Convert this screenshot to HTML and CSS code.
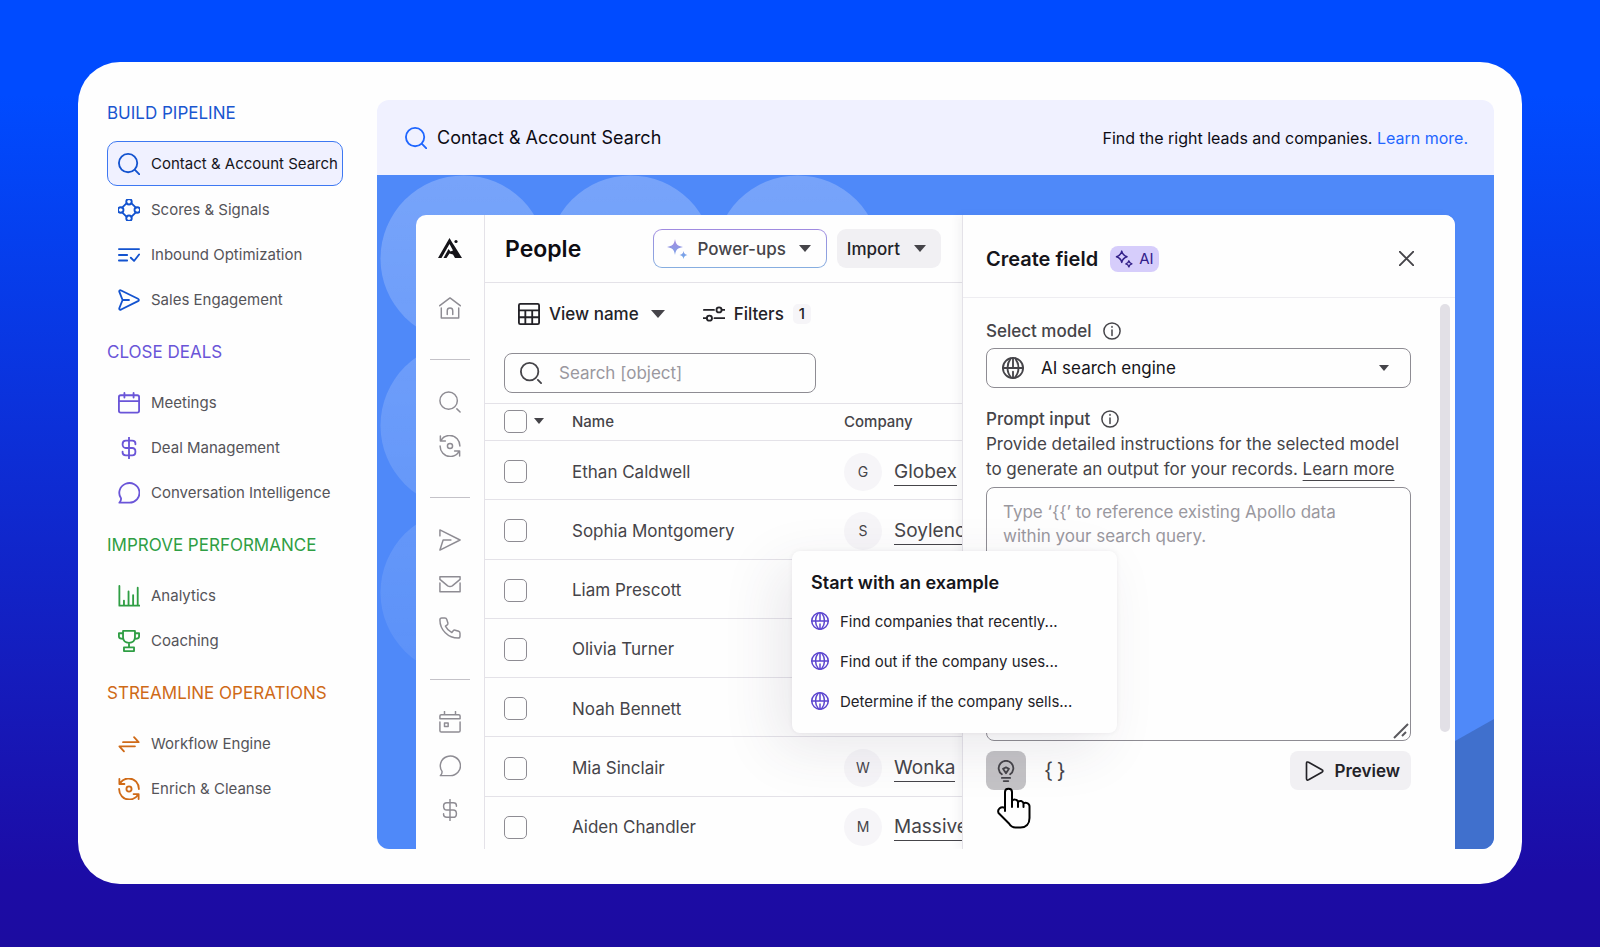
FILE: index.html
```html
<!DOCTYPE html>
<html lang="en">
<head>
    <meta charset="UTF-8">
    <meta name="viewport" content="width=device-width, initial-scale=1.0">
    <title>Contact &amp; Account Search</title>
    <link rel="stylesheet" href="styles.css">
</head>
<body>
    <!-- Icon sprite -->
    <svg class="sprite" aria-hidden="true">
        <symbol id="i-search" viewBox="0 0 24 24"><circle cx="11" cy="11" r="10"/><path d="M18.500 18.500l5 5"/></symbol>
        <symbol id="i-find" viewBox="0 0 24 24"><circle cx="10.5" cy="10.5" r="9.5"/><path d="M19.500 19.500l3.500 3.500"/></symbol>
        <symbol id="i-nodes" viewBox="0 0 24 24"><circle cx="12" cy="3" r="3"/><circle cx="12" cy="21" r="3"/><circle cx="3" cy="12" r="3"/><circle cx="21" cy="12" r="3"/><path d="M9.500 4.500L4.500 9.500M14.500 4.500L19.500 9.500M4.500 14.500L9.500 19.500M19.500 14.500L14.500 19.500"/></symbol>
        <symbol id="i-listcheck" viewBox="0 0 24 24"><path d="M1 5.500h22M1 12h9M1 18h9M14 15l3.500 3.500L23 11.500"/></symbol>
        <symbol id="i-send" viewBox="0 0 24 24"><path d="M1.500 3.200c-.5-1.600.5-2.300 1.900-1.600l18.400 9c1.300.7 1.300 2 0 2.700l-18.400 9.100c-1.400.6-2.400-.2-1.900-1.700L5 12zM5 12h7"/></symbol>
        <symbol id="i-calendar" viewBox="0 0 24 24"><rect x="1" y="3.500" width="22" height="19" rx="2"/><path d="M1 10h22M7 1v5M17 1v5"/></symbol>
        <symbol id="i-dollar" viewBox="0 0 24 24"><path d="M12 .5v23M19 8V7c0-2-1.500-3-3.500-3h-7C6.500 4 5 5.500 5 7.800S6.500 12 8.500 12h7c2 0 3.500 1.500 3.500 4s-1.500 4-3.500 4h-7C6.500 20 5 19 5 17v-1"/></symbol>
        <symbol id="i-chat" viewBox="0 0 24 24"><path d="M3.300 17.800A11 10.700 0 1 1 12 22.500H1.500c1.500-1.300 2-3 1.800-4.700z"/></symbol>
        <symbol id="i-chart" viewBox="0 0 24 24"><path d="M1.500 1v21.500H24M6.500 22v-5M11.500 22V7M16.500 22V11M21.500 22V3"/></symbol>
        <symbol id="i-trophy" viewBox="0 0 24 24"><path d="M5.500 1h13v7c0 3.500-2.500 6-6.500 6s-6.500-2.500-6.500-6zM5.500 3.500H1V7c0 1.500 1.500 2.500 4.500 2.500M18.500 3.500H23V7c0 1.500-1.500 2.500-4.500 2.500M12 14v5M6.500 19h11v4h-11z"/></symbol>
        <symbol id="i-swap" viewBox="0 0 24 24"><path d="M5.500 10H22.500L17.500 4.500M18.500 14.500H1.500l5 5.500"/></symbol>
        <symbol id="i-enrich" viewBox="0 0 24 24"><circle cx="12" cy="12" r="2.800"/><path d="M1.500 1v5.500H7M2.500 5.500C6-.5 15-1.200 19.800 4c2 2.200 3 5 3 8M22.500 23v-5.500H17M21.500 18.500c-3.500 6-12.500 6.700-17.300 1.500-2-2.200-3-5-3-8"/></symbol>
        <symbol id="i-home" viewBox="0 0 24 24"><path d="M.8 9.500L12 1l11.200 8.500M2.500 12v11h19V12M9 19v-4c0-4 6-4 6 0v4"/></symbol>
        <symbol id="i-plane" viewBox="0 0 24 24"><path d="M1 7.500V1l22 11L1 23l3.500-11H13"/></symbol>
        <symbol id="i-mail" viewBox="0 0 24 24"><path d="M1 7V4h22v3l-8.500 7c-2 1.200-3 1.200-5 0L1 7M1 11v9.500h22V11"/></symbol>
        <symbol id="i-phone" viewBox="0 0 24 24"><path d="M3 1.200h3.500c1 0 1.700.6 2 1.500l1.200 3.800c.2.900 0 1.600-.7 2.200L7 10c1.500 3 4 5.500 7 7l1.500-2c.6-.7 1.300-.9 2.200-.6l3.800 1.200c.9.300 1.400 1 1.400 2V21c0 1.200-.8 2-2 2C10 23 1 14 1 3.200c0-1.200.8-2 2-2z"/></symbol>
        <symbol id="i-schedule" viewBox="0 0 24 24"><path d="M1 8.500V5.500C1 4.500 1.500 4 2.500 4h19c1 0 1.500.5 1.500 1.500v3zM1 12v9.500c0 1 .5 1.500 1.500 1.500h19c1 0 1.500-.5 1.500-1.500V12M6 .5V4M18 .5V4M6 13h4v4H6z"/></symbol>
        <symbol id="i-grid" viewBox="0 0 24 24"><rect x="1" y="1" width="22" height="22" rx="1.500"/><path d="M1 8h22M1 15.500h22M8 8v15M15.500 8v15"/></symbol>
        <symbol id="i-filter" viewBox="0 0 24 24"><circle cx="17.500" cy="7.500" r="2.800"/><circle cx="7" cy="16.500" r="2.800"/><path d="M1 7.500h11M20.500 7.500H24M0 16.500h4M12.500 16.500H24"/></symbol>
        <symbol id="i-globe" viewBox="0 0 24 24"><circle cx="12" cy="12" r="11"/><path d="M1 12h22M12 1v11M9.500 1.500C7 5 6 8 6 12c0 4 1.500 7.500 4 10.500M14.500 1.500C17 5 18 8 18 12c0 4-1.500 7.500-4 10.500M12 16v7"/></symbol>
        <symbol id="i-info" viewBox="0 0 24 24"><circle cx="12" cy="12" r="10.800"/><path d="M12 10.500V18M12 6v1"/></symbol>
        <symbol id="i-close" viewBox="0 0 24 24"><path d="M1 1l22 22M23 1L1 23"/></symbol>
        <symbol id="i-sparkle" viewBox="0 0 24 24"><path d="M9 1.500c1 4.500 2.500 6 7 7.500-4.500 1.500-6 3-7 7.500-1-4.500-2.500-6-7-7.500 4.500-1.500 6-3 7-7.500zM18.500 14.500c.6 2.400 1.600 3.400 4 4-2.400.6-3.400 1.600-4 4-.6-2.400-1.600-3.400-4-4 2.400-.6 3.400-1.600 4-4z"/></symbol>
        <symbol id="i-bulb" viewBox="0 0 24 24"><path d="M7.500 15.500a8 8 0 1 1 9 0M7.500 19.500h9M9.500 23h5M12 14.500L8.800 9.500l3.200-1.500 3.200 1.500z"/></symbol>
        <symbol id="i-play" viewBox="0 0 24 24"><path d="M3 3c0-1.800 1-2.200 2.500-1.500l16 9c1.500.8 1.500 2.200 0 3l-16 9C4 23.300 3 22.800 3 21z"/></symbol>
    </svg>

    <div class="card">
        <nav class="sidebar">
            <section class="group build">
                <h2>BUILD PIPELINE</h2>
                <a href="#" class="nav-item active"><svg class="icon"><use href="#i-search"/></svg>Contact &amp; Account Search</a>
                <a href="#" class="nav-item"><svg class="icon"><use href="#i-nodes"/></svg>Scores &amp; Signals</a>
                <a href="#" class="nav-item"><svg class="icon"><use href="#i-listcheck"/></svg>Inbound Optimization</a>
                <a href="#" class="nav-item"><svg class="icon"><use href="#i-send"/></svg>Sales Engagement</a>
            </section>
            <section class="group close">
                <h2>CLOSE DEALS</h2>
                <a href="#" class="nav-item"><svg class="icon"><use href="#i-calendar"/></svg>Meetings</a>
                <a href="#" class="nav-item"><svg class="icon"><use href="#i-dollar"/></svg>Deal Management</a>
                <a href="#" class="nav-item"><svg class="icon"><use href="#i-chat"/></svg>Conversation Intelligence</a>
            </section>
            <section class="group improve">
                <h2>IMPROVE PERFORMANCE</h2>
                <a href="#" class="nav-item"><svg class="icon"><use href="#i-chart"/></svg>Analytics</a>
                <a href="#" class="nav-item"><svg class="icon"><use href="#i-trophy"/></svg>Coaching</a>
            </section>
            <section class="group streamline">
                <h2>STREAMLINE OPERATIONS</h2>
                <a href="#" class="nav-item"><svg class="icon"><use href="#i-swap"/></svg>Workflow Engine</a>
                <a href="#" class="nav-item"><svg class="icon"><use href="#i-enrich"/></svg>Enrich &amp; Cleanse</a>
            </section>
        </nav>

        <main class="panel">
            <header class="panel-header">
                <h1><svg class="icon"><use href="#i-search"/></svg>Contact &amp; Account Search</h1>
                <p>Find the right leads and companies. <a href="#">Learn more.</a></p>
            </header>

            <div class="stage">
                <svg class="circles" width="520" height="520" aria-hidden="true">
                    <defs>
                        <pattern id="dots" width="167" height="167" x="3" patternUnits="userSpaceOnUse"><circle cx="83.5" cy="83.5" r="83" fill="#fff"/></pattern>
                        <linearGradient id="fade" x1="0" y1="0" x2="0" y2="1"><stop offset="0" stop-color="#fff" stop-opacity=".23"/><stop offset="1" stop-color="#fff" stop-opacity=".07"/></linearGradient>
                        <mask id="dotmask"><rect x="3" width="501" height="501" fill="url(#dots)"/></mask>
                    </defs>
                    <rect width="520" height="520" fill="url(#fade)" mask="url(#dotmask)"/>
                </svg>
                <svg class="wedge" width="46" height="130" aria-hidden="true"><path d="M0 26L46 0V130H0z" fill="#4070cd"/></svg>

                <div class="app">
                    <nav class="rail">
                        <a href="#" class="logo" aria-label="Home"><svg viewBox="0 0 24 22"><path d="M11.500 1L0 21h3.500l8-14 3.500 6.500-2.500 1-2-2.500L5.500 21h3l3-4.500 3.500 1L17 21h7l-7.500-12-2-3z"/><circle cx="18" cy="4.500" r="1.600"/></svg></a>
                        <a href="#" aria-label="Dashboard" class="rail-home"><svg class="icon"><use href="#i-home"/></svg></a>
                        <hr>
                        <a href="#" aria-label="Search"><svg class="icon"><use href="#i-find"/></svg></a>
                        <a href="#" aria-label="Enrich"><svg class="icon"><use href="#i-enrich"/></svg></a>
                        <hr>
                        <a href="#" aria-label="Sequences"><svg class="icon"><use href="#i-plane"/></svg></a>
                        <a href="#" aria-label="Emails"><svg class="icon"><use href="#i-mail"/></svg></a>
                        <a href="#" aria-label="Calls"><svg class="icon"><use href="#i-phone"/></svg></a>
                        <hr>
                        <a href="#" aria-label="Meetings"><svg class="icon"><use href="#i-schedule"/></svg></a>
                        <a href="#" aria-label="Conversations"><svg class="icon"><use href="#i-chat"/></svg></a>
                        <a href="#" aria-label="Deals"><svg class="icon"><use href="#i-dollar"/></svg></a>
                    </nav>

                    <section class="people">
                        <div class="people-header">
                            <h2>People</h2>
                            <button type="button" class="power-ups">
                                <svg width="24" height="24" viewBox="0 0 24 24" aria-hidden="true">
                                    <defs><linearGradient id="spark" x1="0" y1="0" x2="0" y2="1"><stop offset="0" stop-color="#a88ae0"/><stop offset="1" stop-color="#6fa8ea"/></linearGradient></defs>
                                    <path fill="url(#spark)" d="M10 2c1 5.500 2.500 7 8 8-5.500 1-7 2.500-8 8-1-5.500-2.500-7-8-8 5.500-1 7-2.500 8-8zM18.500 14c.6 2.600 1.400 3.400 4 4-2.600.6-3.400 1.400-4 4-.6-2.600-1.400-3.400-4-4 2.600-.6 3.400-1.400 4-4z"/>
                                </svg>
                                Power-ups <span class="caret"></span>
                            </button>
                            <button type="button" class="import">Import <span class="caret"></span></button>
                        </div>

                        <div class="toolbar">
                            <button type="button" class="view"><svg class="icon"><use href="#i-grid"/></svg>View name <span class="caret"></span></button>
                            <button type="button" class="filters"><svg class="icon"><use href="#i-filter"/></svg>Filters <span class="count">1</span></button>
                        </div>

                        <label class="search">
                            <svg class="icon"><use href="#i-find"/></svg>
                            <input type="text" placeholder="Search [object]" aria-label="Search">
                        </label>

                        <div class="table-wrap">
                            <table>
                                <thead>
                                    <tr>
                                        <th class="pick"><input type="checkbox" aria-label="Select all"><span class="caret small"></span></th>
                                        <th class="name">Name</th>
                                        <th>Company</th>
                                    </tr>
                                </thead>
                                <tbody>
                                    <tr><td class="pick"><input type="checkbox" aria-label="Select Ethan Caldwell"></td><td>Ethan Caldwell</td><td><span class="avatar">G</span><a href="#">Globex</a></td></tr>
                                    <tr><td class="pick"><input type="checkbox" aria-label="Select Sophia Montgomery"></td><td>Sophia Montgomery</td><td><span class="avatar">S</span><a href="#">Soylenc</a></td></tr>
                                    <tr><td class="pick"><input type="checkbox" aria-label="Select Liam Prescott"></td><td>Liam Prescott</td><td></td></tr>
                                    <tr><td class="pick"><input type="checkbox" aria-label="Select Olivia Turner"></td><td>Olivia Turner</td><td></td></tr>
                                    <tr><td class="pick"><input type="checkbox" aria-label="Select Noah Bennett"></td><td>Noah Bennett</td><td></td></tr>
                                    <tr><td class="pick"><input type="checkbox" aria-label="Select Mia Sinclair"></td><td>Mia Sinclair</td><td><span class="avatar">W</span><a href="#">Wonka</a></td></tr>
                                    <tr><td class="pick"><input type="checkbox" aria-label="Select Aiden Chandler"></td><td>Aiden Chandler</td><td><span class="avatar">M</span><a href="#">Massive</a></td></tr>
                                </tbody>
                            </table>
                        </div>
                    </section>

                    <aside class="drawer">
                        <div class="drawer-header">
                            <h2>Create field</h2>
                            <span class="ai-badge"><svg class="icon"><use href="#i-sparkle"/></svg>AI</span>
                            <button type="button" class="close-btn" aria-label="Close"><svg class="icon"><use href="#i-close"/></svg></button>
                        </div>
                        <div class="drawer-body">
                            <form class="form">
                                <label for="model">Select model <svg class="icon"><use href="#i-info"/></svg></label>
                                <div class="select">
                                    <svg class="icon"><use href="#i-globe"/></svg>
                                    <select id="model"><option>AI search engine</option></select>
                                    <span class="caret small"></span>
                                </div>
                                <label for="prompt">Prompt input <svg class="icon"><use href="#i-info"/></svg></label>
                                <p class="help">Provide detailed instructions for the selected model to generate an output for your records. <a href="#">Learn more</a></p>
                                <div class="prompt">
                                    <textarea id="prompt" placeholder="Type ‘{{’ to reference existing Apollo data within your search query."></textarea>
                                    <svg class="grip" viewBox="0 0 16 16" aria-hidden="true"><path d="M1 15L15 1M9 13l4-4"/></svg>
                                </div>
                                <div class="actions">
                                    <div class="examples-anchor">
                                        <button type="button" class="bulb" aria-label="Examples"><svg class="icon"><use href="#i-bulb"/></svg></button>
                                        <div class="examples">
                                            <h3>Start with an example</h3>
                                            <button type="button"><svg class="icon"><use href="#i-globe"/></svg>Find companies that recently...</button>
                                            <button type="button"><svg class="icon"><use href="#i-globe"/></svg>Find out if the company uses...</button>
                                            <button type="button"><svg class="icon"><use href="#i-globe"/></svg>Determine if the company sells...</button>
                                        </div>
                                        <svg class="cursor" viewBox="0 0 34 42" aria-hidden="true"><path d="M8 24V5c0-4.500 7-4.500 7 0v9c1-2 5.500-2 6 1 1.500-2 5-1 5.500 1.500 2-1.500 6-.5 6 3V31c0 6-3.500 9.500-9 9.500h-5c-3 0-5-1.500-6.500-4L1.500 26c-1.500-4 2.500-7 6.500-5M15 12v8M21 14v6M26.500 16v4"/></svg>
                                    </div>
                                    <button type="button" class="braces" aria-label="Insert variable">{&thinsp;}</button>
                                    <button type="button" class="preview"><svg class="icon"><use href="#i-play"/></svg>Preview</button>
                                </div>
                            </form>
                            <div class="scrollbar"></div>
                        </div>
                    </aside>
                </div>
            </div>
        </main>
    </div>
</body>
</html>
```
FILE: styles.css
```css
* {
    margin: 0;
    padding: 0;
    box-sizing: border-box;
}

body {
    font-family: Inter, "Liberation Sans", sans-serif;
    background: linear-gradient(180deg, #004bff 0%, #004bff 10%, #1c0ca6 92%, #1c0ca0 100%);
    min-height: 100vh;
    padding: 62px 78px 63px;
    display: flex;
}

button,
input,
select,
textarea {
    font: inherit;
    color: inherit;
    background: none;
    border: none;
    outline: none;
}

a {
    color: inherit;
    text-decoration: none;
}

.sprite {
    position: absolute;
    width: 0;
    height: 0;
}

.icon {
    width: 22px;
    height: 22px;
    flex: none;
    fill: none;
    stroke: currentColor;
    stroke-width: 2;
    stroke-linecap: round;
    stroke-linejoin: round;
    overflow: visible;
}

.caret {
    border: 7px solid transparent;
    border-top: 8px solid #454449;
    border-bottom: none;
}

.caret.small {
    border-width: 6px 5px 0;
}

.card {
    flex: 1;
    display: flex;
    background: #fefefe;
    border-radius: 42px;
    padding: 38px 28px 35px 29px;
}

/* Left navigation */
.sidebar {
    width: 236px;
    margin-right: 34px;
    padding-top: 3px;
    flex: none;
    display: flex;
    flex-direction: column;
    gap: 20px;
}

.group h2 {
    font-size: 17px;
    line-height: 20px;
    font-weight: 400;
    margin-bottom: 18px;
    white-space: nowrap;
}

.build { color: #1a56d0; }
.close { color: #6a55d8; }
.improve { color: #2f9e44; }
.streamline { color: #cf6a17; }

.nav-item {
    display: flex;
    align-items: center;
    gap: 11px;
    height: 45px;
    padding-left: 10px;
    border: 1px solid transparent;
    border-radius: 10px;
    font-size: 15px;
    color: #555459;
    white-space: nowrap;
}

.nav-item.active {
    margin-bottom: 1px;
    background: #f0f1ff;
    border-color: #3d78f2;
    color: #16151c;
}

.build .icon { color: #1353cf; }
.close .icon { color: #6a55d8; }
.improve .icon { color: #2f9e44; }
.streamline .icon { color: #cf6a17; }

/* Main panel */
.panel {
    flex: 1;
    min-width: 0;
    display: flex;
    flex-direction: column;
    border-radius: 12px;
    overflow: hidden;
}

.panel-header {
    height: 75px;
    padding: 0 26px 0 28px;
    display: flex;
    align-items: center;
    justify-content: space-between;
    background: #f0f1ff;
    color: #0c0b14;
}

.panel-header h1 {
    display: flex;
    align-items: center;
    gap: 10px;
    font-size: 18px;
    font-weight: 400;
}

.panel-header .icon {
    color: #1f66ff;
}

.panel-header p {
    font-size: 16px;
}

.panel-header a {
    color: #1f66ff;
}

.stage {
    position: relative;
    flex: 1;
    display: flex;
    padding: 40px 39px 0 39px;
    background: #4f89f9;
}

.circles {
    position: absolute;
    top: 0;
    left: 0;
}

.wedge {
    position: absolute;
    right: 0;
    bottom: 0;
}

.app {
    position: relative;
    flex: 1;
    min-width: 0;
    display: grid;
    grid-template-columns: 69px 1fr 493px;
    background: #fefefe;
    border-radius: 10px 10px 0 0;
    color: #454449;
}

/* Icon rail */
.rail {
    display: flex;
    flex-direction: column;
    align-items: center;
    padding-top: 22px;
    gap: 22px;
    border-right: 1px solid #e4e2e8;
    color: #8e8c93;
}

.rail a {
    display: block;
    height: 22px;
}

.rail .icon {
    stroke-width: 1.6;
}

.logo svg {
    width: 24px;
    height: 22px;
    fill: #151419;
}

.rail .rail-home {
    margin-top: 16px;
}

.rail hr {
    width: 40px;
    border: none;
    border-top: 1px solid #c4c2c8;
    margin: 18px 0 9px;
}

/* People list */
.people {
    min-width: 0;
    display: flex;
    flex-direction: column;
}

.people-header {
    height: 68px;
    padding: 0 21px 0 20px;
    display: flex;
    align-items: center;
    border-bottom: 1px solid #e4e2e8;
}

.people-header h2 {
    font-size: 23px;
    font-weight: 600;
    color: #0e0d12;
    margin-right: auto;
}

.people button {
    display: flex;
    align-items: center;
    font-size: 17px;
    font-weight: 500;
    white-space: nowrap;
}

.people .power-ups {
    height: 39px;
    padding: 0 15px 0 11px;
    gap: 9px;
    border: 1px solid transparent;
    border-radius: 9px;
    background: linear-gradient(#fefefe, #fefefe) padding-box, linear-gradient(#a08ae0, #86aee0) border-box;
}

.power-ups .caret {
    border-width: 7px 6px 0;
    margin-left: 4px;
}

.people .import {
    height: 39px;
    padding: 0 15px 0 10px;
    margin-left: 10px;
    gap: 14px;
    border-radius: 9px;
    background: #f1f0f3;
    color: #232227;
}

.import .caret {
    border-width: 7px 6px 0;
}

.toolbar {
    height: 24px;
    margin: 19px 0 27px 33px;
    display: flex;
    gap: 38px;
    color: #232227;
}

.toolbar button {
    gap: 9px;
}

.toolbar .caret {
    margin-left: 3px;
    border-width: 8px 7px 0;
}

.count {
    font-size: 15px;
    padding: 0 6px;
    line-height: 20px;
    border-radius: 5px;
    background: #f6f5f8;
}

.search {
    width: 312px;
    height: 40px;
    margin: 0 0 10px 19px;
    padding: 0 15px;
    display: flex;
    align-items: center;
    gap: 17px;
    border: 1px solid #8e8c93;
    border-radius: 8px;
}

.search input {
    flex: 1;
    min-width: 0;
    font-size: 17px;
}

::placeholder {
    color: #9a989f;
    opacity: 1;
}

.table-wrap {
    flex: 1 1 0;
    min-height: 0;
    overflow: hidden;
}

table {
    width: 100%;
    height: 453px;
    table-layout: fixed;
    border-collapse: collapse;
    border-top: 1px solid #e4e2e8;
    font-size: 17px;
}

th {
    height: 37px;
    padding-bottom: 2px;
    font-size: 15px;
    font-weight: 500;
    text-align: left;
}

td {
    height: 59px;
    padding-top: 3px;
}

th,
td {
    border-bottom: 1px solid #e4e2e8;
    white-space: nowrap;
    vertical-align: middle;
}

.pick {
    width: 87px;
    padding-left: 19px;
}

.name {
    width: 272px;
}

.pick input {
    appearance: none;
    width: 23px;
    height: 23px;
    border: 1px solid #8e8c93;
    border-radius: 5px;
    vertical-align: middle;
}

.pick .caret {
    display: inline-block;
    vertical-align: middle;
    margin-left: 7px;
}

.avatar {
    display: inline-block;
    width: 38px;
    margin-right: 12px;
    border-radius: 50%;
    background: #f6f5f8;
    font-size: 14px;
    line-height: 38px;
    text-align: center;
    vertical-align: middle;
}

td a {
    display: inline-block;
    font-size: 19px;
    line-height: 27px;
    border-bottom: 1px solid #454449;
    vertical-align: middle;
}

/* Create field drawer */
.drawer {
    display: flex;
    flex-direction: column;
    border-left: 1px solid #e4e2e8;
    border-radius: 0 10px 0 0;
    background: #fefefe;
    box-shadow: -4px 0 8px rgba(60, 50, 80, 0.05);
}

.drawer-header {
    height: 83px;
    padding: 5px 41px 0 23px;
    display: flex;
    align-items: center;
    border-bottom: 1px solid #eeedf1;
}

.drawer-header h2 {
    font-size: 20px;
    font-weight: 600;
    color: #16151a;
}

.ai-badge {
    display: flex;
    align-items: center;
    gap: 6px;
    height: 26px;
    margin-left: 12px;
    padding: 0 5px;
    border-radius: 8px;
    background: #d6cdfb;
    color: #33208a;
    font-size: 15px;
    font-weight: 400;
}

.ai-badge .icon {
    width: 18px;
    height: 18px;
}

.close-btn {
    margin-left: auto;
    height: 15px;
}

.close-btn .icon {
    display: block;
    width: 15px;
    height: 15px;
    stroke-width: 3;
}

.drawer-body {
    flex: 1;
    display: flex;
    justify-content: space-between;
    padding: 6px 5px 0 23px;
}

.form {
    width: 425px;
    padding-top: 14px;
    font-size: 17px;
}

.form label {
    display: flex;
    align-items: center;
    gap: 11px;
    line-height: 26px;
    font-weight: 500;
}

.form label .icon {
    width: 18px;
    height: 18px;
}

.select {
    display: flex;
    align-items: center;
    height: 40px;
    margin: 4px 0 18px;
    padding: 0 21px 0 15px;
    border: 1px solid #8e8c93;
    border-radius: 8px;
}

.select select {
    appearance: none;
    flex: 1;
    padding-left: 17px;
    color: #16151a;
}

.help {
    line-height: 25px;
}

.help a {
    text-decoration: underline;
    text-decoration-thickness: 1px;
    text-underline-offset: 5px;
}

.prompt {
    position: relative;
    height: 254px;
    margin-top: 5px;
}

.prompt textarea {
    display: block;
    width: 100%;
    height: 100%;
    padding: 12px 48px 12px 16px;
    border: 1px solid #8e8c93;
    border-radius: 8px;
    line-height: 24px;
    resize: none;
}

.grip {
    position: absolute;
    right: 2px;
    bottom: 2px;
    width: 16px;
    height: 16px;
    fill: none;
    stroke: #5a595e;
    stroke-width: 2;
}

.actions {
    display: flex;
    align-items: center;
    margin-top: 10px;
}

.examples-anchor {
    position: relative;
}

.bulb {
    display: flex;
    align-items: center;
    justify-content: center;
    width: 40px;
    height: 39px;
    border-radius: 8px;
    background: #c4c3c6;
}

.examples {
    position: absolute;
    left: -194px;
    bottom: 57px;
    width: 325px;
    height: 182px;
    padding: 20px 19px 0;
    border-radius: 8px;
    background: #fefefe;
    box-shadow: 0 0 4px rgba(60, 50, 80, 0.08), -16px 16px 56px rgba(60, 50, 80, 0.1);
}

.examples h3 {
    font-size: 18px;
    line-height: 24px;
    font-weight: 600;
    color: #16151a;
    margin-bottom: 6px;
}

.examples button {
    display: flex;
    align-items: center;
    gap: 11px;
    height: 40px;
    font-size: 15px;
    color: #232227;
    white-space: nowrap;
}

.examples .icon {
    width: 18px;
    height: 18px;
    color: #5b45cf;
}

.cursor {
    position: absolute;
    left: 11px;
    top: 36px;
    width: 34px;
    height: 42px;
    fill: #fefefe;
    stroke: #000;
    stroke-width: 2;
    stroke-linejoin: round;
    stroke-linecap: round;
}

.braces {
    margin-left: 18px;
    font-size: 21px;
    line-height: 24px;
}

.preview {
    display: flex;
    align-items: center;
    gap: 10px;
    height: 39px;
    margin-left: auto;
    padding: 0 11px 0 14px;
    border-radius: 8px;
    background: #f1f0f3;
    color: #232227;
    font-weight: 600;
}

.preview .icon {
    width: 20px;
    height: 20px;
}

.scrollbar {
    width: 10px;
    height: 428px;
    border-radius: 5px;
    background: #e2e0e6;
}
```
